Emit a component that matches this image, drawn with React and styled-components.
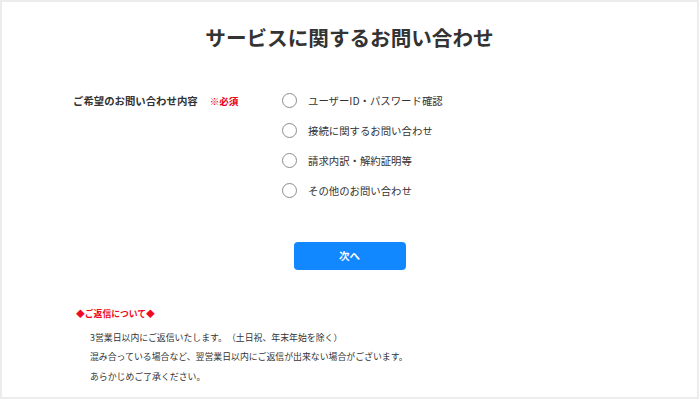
import React from "react";
import styled, { createGlobalStyle } from "styled-components";

const GlobalStyle = createGlobalStyle`
  html, body {
    margin: 0;
    padding: 0;
    background: #ffffff;
  }
  body {
    font-family: "Noto Sans CJK JP", "Noto Sans", sans-serif;
    color: #333333;
    text-spacing-trim: space-all;
  }
`;

const options = [
  "ユーザーID・パスワード確認",
  "接続に関するお問い合わせ",
  "請求内訳・解約証明等",
  "その他のお問い合わせ",
];

const notes = [
  "3営業日以内にご返信いたします。（土日祝、年末年始を除く）",
  "混み合っている場合など、翌営業日以内にご返信が出来ない場合がございます。",
  "あらかじめご了承ください。",
];

function App() {
  return (
    <>
      <GlobalStyle />
      <Frame>
        <Title>サービスに関するお問い合わせ</Title>
        <FormRow>
          <Label>
            ご希望のお問い合わせ内容
            <Required>※必須</Required>
          </Label>
          <OptionList>
            {options.map((o) => (
              <Option key={o}>
                <Radio />
                <OptionText>{o}</OptionText>
              </Option>
            ))}
          </OptionList>
        </FormRow>
        <ButtonRow>
          <NextButton>次へ</NextButton>
        </ButtonRow>
        <Notice>
          <NoticeHead>◆ご返信について◆</NoticeHead>
          {notes.map((n) => (
            <NoticeLine key={n}>{n}</NoticeLine>
          ))}
        </Notice>
      </Frame>
    </>
  );
}

export default App;

const Frame = styled.div`
  width: 699px;
  height: 399px;
  box-sizing: border-box;
  border: 2px solid #ececec;
  display: flex;
  flex-direction: column;
  overflow: hidden;
`;

const Title = styled.h1`
  margin: 0;
  padding-top: 20px;
  text-align: center;
  font-size: 20.6px;
  line-height: 30px;
  font-weight: 700;
  color: #333333;
`;

const FormRow = styled.div`
  display: flex;
  margin-top: 33.6px;
  padding-left: 71px;
`;

const Label = styled.div`
  width: 209px;
  font-size: 10.4px;
  line-height: 30px;
  font-weight: 700;
  color: #333333;
`;

const Required = styled.span`
  margin-left: 12px;
  color: #e8001a;
  font-size: 9.6px;
`;

const OptionList = styled.div`
  display: flex;
  flex-direction: column;
`;

const Option = styled.label`
  display: flex;
  align-items: center;
  height: 30px;
  gap: 11px;
`;

const Radio = styled.span`
  width: 15px;
  height: 15px;
  box-sizing: border-box;
  border: 1.3px solid #8c8c8c;
  border-radius: 50%;
  background: #ffffff;
`;

const OptionText = styled.span`
  font-size: 10.4px;
  color: #333333;
`;

const ButtonRow = styled.div`
  display: flex;
  justify-content: center;
  margin-top: 36px;
`;

const NextButton = styled.button`
  width: 112px;
  height: 28px;
  border: none;
  border-radius: 4px;
  background: #1188ff;
  color: #ffffff;
  font-family: "Noto Sans CJK JP", sans-serif;
  font-size: 10.5px;
  font-weight: 700;
  padding: 0;
`;

const Notice = styled.div`
  margin-top: 34px;
  padding-left: 74px;
  display: flex;
  flex-direction: column;
`;

const NoticeHead = styled.div`
  color: #f00a1e;
  font-size: 8.8px;
  line-height: 19.5px;
  font-weight: 700;
  margin-bottom: 4.5px;
`;

const NoticeLine = styled.div`
  padding-left: 14px;
  font-size: 8.9px;
  line-height: 19.5px;
  color: #333333;
`;
